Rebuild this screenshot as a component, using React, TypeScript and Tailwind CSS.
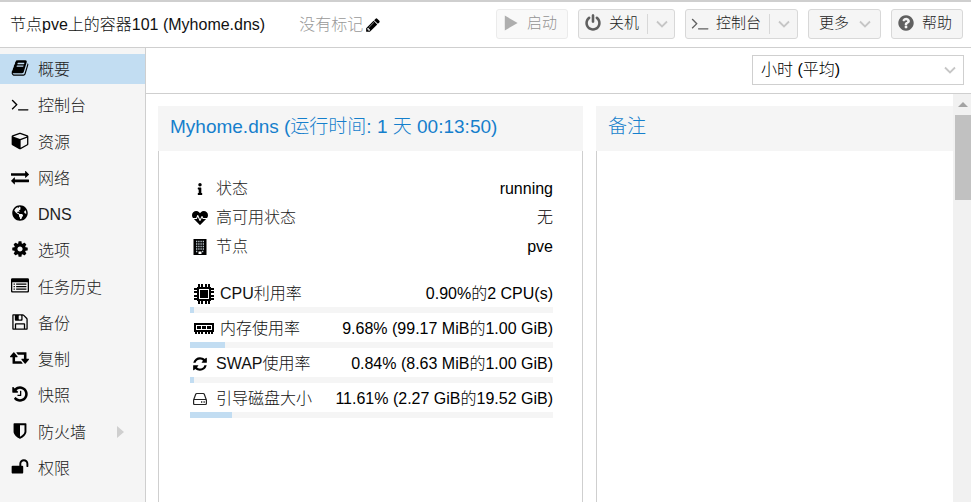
import type { ReactNode } from "react";
import { FaGlobeAmericas, FaHeartbeat, FaInfo } from "react-icons/fa";

const paths = {
  book: "M1703 478q40 57 18 129l-275 906q-19 64-76.5 107.5t-122.5 43.5h-923q-77 0-148.5-53.5t-99.5-131.5q-24-67-2-127 0-4 3-27t4-37q1-8-3-21.5t-3-19.5q2-11 8-21t16.5-23.5 16.5-23.5q23-38 45-91.5t30-91.5q3-10 .5-30t-.5-28q3-11 17-28t17-23q21-36 42-92t25-90q1-9-2.5-32t.5-28q4-13 22-30.5t22-22.5q19-26 42.5-84.5t27.5-96.5q1-8-3-25.5t-2-26.5q2-8 9-18t18-23 17-21q8-12 16.5-30.5t15-35 16-36 19.5-32 26.500-23.500 36-11.500 47.500 5.500l-1 3q38-9 51-9h761q74 0 114 56t18 130l-274 906q-36 119-71.500 153.500t-128.500 34.500h-869q-27 0-38 15-11 16-1 43 24 70 144 70h923q29 0 56-15.500t35-41.500l300-987q7-22 5-57 38 15 59 43zm-1064 2q-4 13 2 22.500t20 9.500h608q13 0 25.500-9.500t16.500-22.500l21-64q4-13-2-22.500t-20-9.500h-608q-13 0-25.500 9.500t-16.500 22.500zm-83 256q-4 13 2 22.500t20 9.500h608q13 0 25.500-9.500t16.500-22.500l21-64q4-13-2-22.500t-20-9.500h-608q-13 0-25.500 9.500t-16.500 22.500z",
  terminal: "M649 983l-466 466q-10 10-23 10t-23-10l-50-50q-10-10-10-23t10-23l393-393-393-393q-10-10-10-23t10-23l50-50q10-10 23-10t23 10l466 466q10 10 10 23t-10 23zm1079 457v64q0 14-9 23t-23 9h-960q-14 0-23-9t-9-23v-64q0-14 9-23t23-9h960q14 0 23 9t9 23z",
  cube: "M896 1629l640-349v-636l-640 233v752zm-64-865l698-254-698-254-698 254zm832-252v768q0 35-18 65t-49 47l-704 384q-28 16-61 16t-61-16l-704-384q-31-17-49-47t-18-65v-768q0-40 23-73t61-47l704-256q22-8 44-8t44 8l704 256q38 14 61 47t23 73z",
  exchange: "M1792 1184v192q0 13-9.500 22.500t-22.500 9.500h-1376v192q0 13-9.500 22.500t-22.500 9.500q-12 0-24-10l-319-320q-9-9-9-22 0-14 9-23l320-320q9-9 23-9 13 0 22.500 9.500t9.500 22.500v192h1376q13 0 22.500 9.500t9.500 22.500zm0-544q0 14-9 23l-320 320q-9 9-23 9-13 0-22.500-9.500t-9.500-22.500v-192h-1376q-13 0-22.500-9.500t-9.500-22.500v-192q0-13 9.500-22.500t22.500-9.500h1376v-192q0-14 9-23t23-9q12 0 24 10l319 319q9 9 9 23z",
  cog: "M1152 896q0-106-75-181t-181-75-181 75-75 181 75 181 181 75 181-75 75-181zm512-109v222q0 12-8 23t-20 13l-185 28q-19 54-39 91 35 50 107 138 10 12 10 25t-9 23q-27 37-99 108t-94 71q-12 0-26-9l-138-108q-44 23-91 38-16 136-29 186-7 28-36 28h-222q-14 0-24.500-8.500t-11.500-21.500l-28-184q-49-16-90-37l-141 107q-10 9-25 9-14 0-25-11-126-114-165-168-7-10-7-23 0-12 8-23 15-21 51-66.500t54-70.500q-27-50-41-99l-183-27q-13-2-21-12.500t-8-23.500v-222q0-12 8-23t19-13l186-28q14-46 39-92-40-57-107-138-10-12-10-24 0-10 9-23 26-36 98.500-107.500t94.500-71.500q13 0 26 10l138 107q44-23 91-38 16-136 29-186 7-28 36-28h222q14 0 24.500 8.500t11.500 21.500l28 184q49 16 90 37l142-107q9-9 24-9 13 0 25 10 129 119 165 170 7 8 7 22 0 12-8 23-15 21-51 66.500t-54 70.500q26 50 41 98l183 28q13 2 21 12.500t8 23.500z",
  list: "M128 128H1664Q1792 128 1792 256V1408Q1792 1536 1664 1536H128Q0 1536 0 1408V256Q0 128 128 128ZM128 512V1376Q128 1408 160 1408H1632Q1664 1408 1664 1376V512ZM256 640H384V768H256ZM512 640H1536V768H512ZM256 896H384V1024H256ZM512 896H1536V1024H512ZM256 1152H384V1280H256ZM512 1152H1536V1280H512Z",
  floppy: "M512 1536h768v-384h-768v384zm896 0h128v-896q0-14-10-38.500t-20-34.500l-281-281q-10-10-34-20t-39-10v416q0 40-28 68t-68 28h-576q-40 0-68-28t-28-68v-416h-128v1280h128v-416q0-40 28-68t68-28h832q40 0 68 28t28 68v416zm-384-928v-320q0-13-9.500-22.500t-22.500-9.500h-192q-13 0-22.500 9.500t-9.500 22.500v320q0 13 9.500 22.500t22.500 9.500h192q13 0 22.500-9.500t9.500-22.500zm640 32v928q0 40-28 68t-68 28h-1344q-40 0-68-28t-28-68v-1344q0-40 28-68t68-28h928q40 0 88 20t76 48l280 280q28 28 48 76t20 88z",
  retweet: "M1280 1504q0 13-9.500 22.500t-22.500 9.500h-960q-8 0-13.500-2t-9-7-5.500-8-3-11.500-1-11.500v-600h-192q-26 0-45-19t-19-45q0-24 15-41l320-384q19-22 49-22t49 22l320 384q15 17 15 41 0 26-19 45t-45 19h-192v384h576q16 0 25 11l160 192q7 11 7 21zm640-416q0 24-15 41l-320 384q-20 23-49 23t-49-23l-320-384q-15-17-15-41 0-26 19-45t45-19h192v-384h-576q-16 0-25-12l-160-192q-7-9-7-20 0-13 9.500-22.500t22.500-9.500h960q8 0 13.500 2t9 7 5.500 8 3 11.500 1 11.500v600h192q26 0 45 19t19 45z",
  history: "M1664 896q0 156-61 298t-164 245-245 164-298 61q-172 0-327-72.500t-264-204.500q-7-10-6.500-22.500t8.500-20.500l137-138q10-9 25-9 16 2 23 12 73 95 179 147t225 52q104 0 198.500-40.500t163.500-109.500 109.500-163.500 40.500-198.500-40.500-198.500-109.500-163.500-163.500-109.500-198.500-40.500q-98 0-188 35.500t-160 101.500l137 138q31 30 14 69-17 40-59 40h-448q-26 0-45-19t-19-45v-448q0-42 40-59 39-17 69 14l130 129q107-101 244.500-156.500t284.500-55.500q156 0 298 61t245 164 164 245 61 298zm-640-288v448q0 14-9 23t-23 9h-320q-14 0-23-9t-9-23v-64q0-14 9-23t23-9h224v-352q0-14 9-23t23-9h64q14 0 23 9t9 23z",
  shield: "M1344 960v-640h-448v1137q119-63 213-137 235-184 235-360zm192-768v768q0 86-33.500 170.500t-83 150-118 127.500-126.500 103-121 77.500-89.500 49.500-42.500 20q-12 6-26 6t-26-6q-16-7-42.500-20t-89.500-49.500-121-77.500-126.500-103-118-127.500-83-150-33.500-170.500v-768q0-26 19-45t45-19h1152q26 0 45 19t19 45z",
  unlock: "M1728 576v256q0 26-19 45t-45 19h-64q-26 0-45-19t-19-45v-256q0-106-75-181t-181-75-181 75-75 181v192h96q40 0 68 28t28 68v576q0 40-28 68t-68 28h-960q-40 0-68-28t-28-68v-576q0-40 28-68t68-28h672v-192q0-185 131.500-316.500t316.500-131.500 316.500 131.500 131.500 316.500z",
  power: "M1664 896q0 156-61 298t-164 245-245 164-298 61-298-61-245-164-164-245-61-298q0-182 80.500-343t226.500-270q43-32 95.500-25t83.500 50q32 42 24.500 94.500t-49.500 84.500q-98 74-151.500 181t-53.500 228q0 104 40.500 198.500t109.500 163.500 163.500 109.500 198.500 40.500 198.500-40.500 163.500-109.500 109.500-163.500 40.500-198.500q0-121-53.500-228t-151.500-181q-42-32-49.500-84.500t24.500-94.500q31-43 84-50t95 25q146 109 226.500 270t80.500 343zm-640-768v640q0 52-38 90t-90 38-90-38-38-90v-640q0-52 38-90t90-38 90 38 38 90z",
  question: "M1024 1376v-192q0-14-9-23t-23-9h-192q-14 0-23 9t-9 23v192q0 14 9 23t23 9h192q14 0 23-9t9-23zm256-672q0-88-55.500-163t-138.500-116-170-41q-243 0-371 213-15 24 8 42l132 100q7 6 19 6 16 0 25-12 53-68 86-92 34-24 86-24 48 0 85.500 26t37.500 59q0 38-20 61t-68 45q-63 28-115.500 86.500t-52.500 125.500v36q0 14 9 23t23 9h192q14 0 23-9t9-23q0-19 21.500-49.500t54.500-49.500q32-18 49-28.500t46-35 44.500-48 28-60.500 12.500-81zm384 192q0 209-103 385.500t-279.500 279.500-385.500 103-385.500-103-279.500-279.500-103-385.500 103-385.500 279.500-279.500 385.500-103 385.500 103 279.500 279.500 103 385.500z",
  refresh: "M1639 1056q0 5-1 7-64 268-268 434.500t-478 166.500q-146 0-282.500-55t-243.500-157l-129 129q-19 19-45 19t-45-19-19-45v-448q0-26 19-45t45-19h448q26 0 45 19t19 45-19 45l-137 137q71 66 161 102t187 36q134 0 250-65t186-179q11-17 53-117 8-23 30-23h192q13 0 22.500 9.500t9.500 22.500zm25-800v448q0 26-19 45t-45 19h-448q-26 0-45-19t-19-45 19-45l138-138q-148-137-349-137-134 0-250 65t-186 179q-11 17-53 117-8 23-30 23h-199q-13 0-22.500-9.500t-9.500-22.500v-7q65-268 270-434.500t480-166.500q146 0 284 55.500t245 156.500l130-129q19-19 45-19t45 19 19 45z",
  pencil: "M491 1536l91-91-235-235-91 91v107h128v128h107zm523-928q0-22-22-22-10 0-17 7l-542 542q-7 7-7 17 0 22 22 22 10 0 17-7l542-542q7-7 7-17zm-54-192l416 416-832 832h-416v-416zm683 96q0 53-37 90l-166 166-416-416 166-165q36-38 90-38 53 0 91 38l235 234q37 39 37 91z",
  play: "M200 60L1640 896L200 1732Z",
};

const boxes: Partial<Record<keyof typeof paths, string>> = {
  cube: "-64 64 1792 1792",
  retweet: "0 64 1920 1792",
};

function Icon({ name, className = "size-4" }: { name: keyof typeof paths; className?: string }) {
  return (
    <svg viewBox={boxes[name] ?? "0 0 1792 1792"} fill="currentColor" fillRule="evenodd" className={`${className} shrink-0`} aria-hidden="true">
      <path d={paths[name]} />
    </svg>
  );
}

function Chevron() {
  return (
    <svg viewBox="0 0 12 12" className="size-3 shrink-0 text-[#c6c6c6]" fill="none" stroke="currentColor" strokeWidth="1.8" aria-hidden="true">
      <path d="M1 3.500L6 8.500L11 3.500" />
    </svg>
  );
}

function BuildingIcon() {
  return (
    <svg viewBox="0 0 14 16" className="h-4 w-3.5" aria-hidden="true">
      <path d="M0.500 0H13.500V16H0.500Z" fill="#000" />
      <path d="M3 2.500H11M3 5H11M3 7.500H11M3 10H11M3 12.500H5M9 12.500H11" stroke="#b9c4cc" strokeWidth="1.300" strokeDasharray="1.300 .93" />
      <path d="M5.500 12.500H8.500V15H5.500Z" fill="#fff" />
    </svg>
  );
}

function DiskIcon() {
  return (
    <svg viewBox="0 0 14 14" className="size-3.5" fill="none" stroke="#222" strokeWidth="1.200" aria-hidden="true">
      <path d="M.6 8L2.700 2.300Q3 1.500 3.800 1.500H10.200Q11 1.500 11.300 2.300L13.400 8V11.500Q13.400 12.500 12.400 12.500H1.600Q.6 12.500 .6 11.500ZM.6 7.500H13.400" />
      <path d="M8 10H9.300M10.500 10H11.800" strokeWidth="1.400" />
    </svg>
  );
}

function CpuIcon() {
  return (
    <svg viewBox="0 0 20 20" className="size-5" aria-hidden="true" shapeRendering="crispEdges">
      <path d="M4 0H6V3H4ZM7 0H9V3H7ZM11 0H13V3H11ZM14 0H16V3H14ZM4 17H6V20H4ZM7 17H9V20H7ZM11 17H13V20H11ZM14 17H16V20H14ZM0 4H3V6H0ZM0 7H3V9H0ZM0 11H3V13H0ZM0 14H3V16H0ZM17 4H20V6H17ZM17 7H20V9H17ZM17 11H20V13H17ZM17 14H20V16H17Z" fill="#000" />
      <path d="M3 3H17V17H3Z" fill="#000" />
      <path d="M5 5H15V15H5Z" fill="#fff" />
      <path d="M6 6H14V14H6Z" fill="#000" />
    </svg>
  );
}

function MemoryIcon() {
  return (
    <svg viewBox="0 0 20 11" className="h-[11px] w-5" aria-hidden="true" shapeRendering="crispEdges">
      <path d="M0 0H20V9H0Z" fill="#000" />
      <path d="M2 2H18V7H2Z" fill="#fff" />
      <path d="M3 3H7V6H3ZM8 3H12V6H8ZM13 3H17V6H13ZM1 9H3V11H1ZM4 9H6V11H4ZM7 9H9V11H7ZM11 9H13V11H11ZM14 9H16V11H14ZM17 9H19V11H17Z" fill="#000" />
    </svg>
  );
}

const navItems: { label: string; icon: ReactNode; active?: boolean; expandable?: boolean }[] = [
  { label: "概要", icon: <Icon name="book" className="size-[18px]" />, active: true },
  { label: "控制台", icon: <Icon name="terminal" className="size-[18px]" /> },
  { label: "资源", icon: <Icon name="cube" className="size-[18px]" /> },
  { label: "网络", icon: <Icon name="exchange" className="size-[18px]" /> },
  { label: "DNS", icon: <FaGlobeAmericas className="size-4" /> },
  { label: "选项", icon: <Icon name="cog" className="size-[18px]" /> },
  { label: "任务历史", icon: <Icon name="list" className="size-[18px]" /> },
  { label: "备份", icon: <Icon name="floppy" className="size-[18px]" /> },
  { label: "复制", icon: <Icon name="retweet" className="h-[18px] w-[19px]" /> },
  { label: "快照", icon: <Icon name="history" className="size-[18px]" /> },
  { label: "防火墙", icon: <Icon name="shield" className="size-[18px]" />, expandable: true },
  { label: "权限", icon: <Icon name="unlock" className="size-[18px]" /> },
];

const states = [
  { label: "状态", value: "running", icon: <FaInfo className="size-3" /> },
  { label: "高可用状态", value: "无", icon: <FaHeartbeat className="size-4" /> },
  { label: "节点", value: "pve", icon: <BuildingIcon /> },
];

const usages = [
  { label: "CPU利用率", value: "0.90%的2 CPU(s)", percent: 0.9, icon: <CpuIcon />, wide: true },
  { label: "内存使用率", value: "9.68% (99.17 MiB的1.00 GiB)", percent: 9.68, icon: <MemoryIcon />, wide: true },
  { label: "SWAP使用率", value: "0.84% (8.63 MiB的1.00 GiB)", percent: 0.84, icon: <Icon name="refresh" />, wide: false },
  { label: "引导磁盘大小", value: "11.61% (2.27 GiB的19.52 GiB)", percent: 11.61, icon: <DiskIcon />, wide: false },
];

function ToolButton({ children, className, disabled }: { children: ReactNode; className: string; disabled?: boolean }) {
  return (
    <button
      type="button"
      disabled={disabled}
      className={`flex h-[30px] shrink-0 items-center rounded-[3px] border border-[#d8d8d8] bg-[#f5f5f5] text-[15px] whitespace-nowrap text-[#222] disabled:opacity-50 ${className}`}
    >
      {children}
    </button>
  );
}

function Panel({ title, children, className = "" }: { title: string; children?: ReactNode; className?: string }) {
  return (
    <section className="flex min-w-0 flex-col">
      <h2 className="flex h-[45px] shrink-0 items-center bg-[#f5f5f5] px-3 pb-0.5 text-[19px] whitespace-nowrap text-[#157fcc]">{title}</h2>
      <div className={`flex-1 border-l border-[#cfcfcf] ${className}`}>{children}</div>
    </section>
  );
}

export default function App() {
  return (
    <div className="flex h-screen flex-col overflow-hidden bg-white font-['Liberation_Sans','Noto_Sans_CJK_SC',sans-serif] text-base font-light text-black">
      <header className="flex h-12 shrink-0 items-center border-t-2 border-b border-[#cfcfcf] pr-2 pl-2.5">
        <h1 className="whitespace-nowrap text-[#111]">节点pve上的容器101 (Myhome.dns)</h1>
        <span className="ml-[34px] whitespace-nowrap text-[#999]">没有标记</span>
        <button type="button" aria-label="编辑标记" className="ml-0.5">
          <Icon name="pencil" />
        </button>
        <div className="ml-auto flex gap-2.5 pb-0.5">
          <ToolButton disabled className="w-[72px] gap-2 pl-1.5">
            <Icon name="play" className="mb-0.5 size-4 text-[#606060]" />
            启动
          </ToolButton>
          <ToolButton className="w-[97px] pl-[5px]">
            <Icon name="power" className="mr-[7px] mb-0.5 size-[18px] text-[#606060]" />
            关机
            <span className="mx-2 h-5 w-px bg-[#d8d8d8]" />
            <Chevron />
          </ToolButton>
          <ToolButton className="w-[113px] pl-[5px]">
            <Icon name="terminal" className="mr-[7px] mb-0.5 size-[18px] text-[#606060]" />
            控制台
            <span className="mx-2 h-5 w-px bg-[#d8d8d8]" />
            <Chevron />
          </ToolButton>
          <ToolButton className="w-[73px] gap-2.5 pl-2.5">
            更多
            <Chevron />
          </ToolButton>
          <ToolButton className="w-[72px] pl-[5px]">
            <Icon name="question" className="mr-[7px] mb-0.5 size-[18px] text-[#606060]" />
            帮助
          </ToolButton>
        </div>
      </header>

      <div className="flex min-h-0 flex-1">
        <nav className="w-[146px] shrink-0 border-r border-[#cfcfcf] bg-[#f5f5f5] pt-1.5">
          <ul className="flex h-[429px] flex-col justify-between">
            {navItems.map((item) => (
              <li key={item.label}>
                <a href="#" className={`flex h-[30px] items-center pl-[9px] ${item.active ? "bg-[#c2ddf2]" : ""}`}>
                  <span className="flex w-[21px] shrink-0 justify-center pb-0.5">{item.icon}</span>
                  <span className="ml-2 pt-0.5 text-[#222]">{item.label}</span>
                  {item.expandable && (
                    <svg viewBox="0 0 7 12" className="mr-[21px] ml-auto h-3 w-[7px]" fill="#cfcfcf" aria-hidden="true">
                      <path d="M0 0L7 6L0 12Z" />
                    </svg>
                  )}
                </a>
              </li>
            ))}
          </ul>
        </nav>

        <main className="flex min-w-0 flex-1 flex-col">
          <div className="flex h-[46px] shrink-0 items-center justify-end border-b border-[#cfcfcf] pr-[7px] pb-0.5">
            <div className="relative flex w-[212px] items-center">
              <select aria-label="时间范围" className="h-[30px] w-full appearance-none border border-[#cfcfcf] bg-white px-2 font-light text-black">
                <option>小时 (平均)</option>
              </select>
              <span className="pointer-events-none absolute right-2">
                <Chevron />
              </span>
            </div>
          </div>

          <div className="flex min-h-0 flex-1">
            <div className="grid min-w-0 flex-1 grid-cols-[425fr_357fr] gap-[13px] pt-3 pl-3">
              <Panel title="Myhome.dns (运行时间: 1 天 00:13:50)" className="border-r">
                <div className="flex flex-col pt-[23px] pr-[29px] pl-[31px]">
                  {states.map((row) => (
                    <div key={row.label} className="flex h-[29px] items-center whitespace-nowrap">
                      <span className="mr-1.5 flex w-5 justify-center">{row.icon}</span>
                      <span className="text-[#222]">{row.label}</span>
                      <span className="ml-auto">{row.value}</span>
                    </div>
                  ))}
                  <div className="mt-[17px]">
                    {usages.map((row) => (
                      <div key={row.label}>
                        <div className="flex h-[29px] items-center pt-0.5 whitespace-nowrap">
                          <span className={row.wide ? "mr-1.5 flex w-6 justify-end" : "mr-1.5 flex w-5 justify-center"}>{row.icon}</span>
                          <span className="text-[#111]">{row.label}</span>
                          <span className="ml-auto">{row.value}</span>
                        </div>
                        <div className="h-1.5 bg-[#f5f5f5]">
                          <div className="h-full min-w-1 bg-[#c2ddf2]" style={{ width: `${row.percent}%` }} />
                        </div>
                      </div>
                    ))}
                  </div>
                </div>
              </Panel>
              <Panel title="备注" />
            </div>

            <div className="flex w-[18px] shrink-0 flex-col items-end bg-[#f1f1f1]">
              <div className="flex h-[21px] w-full items-center justify-center pl-0.5">
                <svg viewBox="0 0 10 5" className="h-[5px] w-2.5" fill="#a3a3a3" aria-hidden="true">
                  <path d="M0 5L5 0L10 5Z" />
                </svg>
              </div>
              <div className="h-[85px] w-4 bg-[#c1c1c1]" />
            </div>
          </div>
        </main>
      </div>
    </div>
  );
}
